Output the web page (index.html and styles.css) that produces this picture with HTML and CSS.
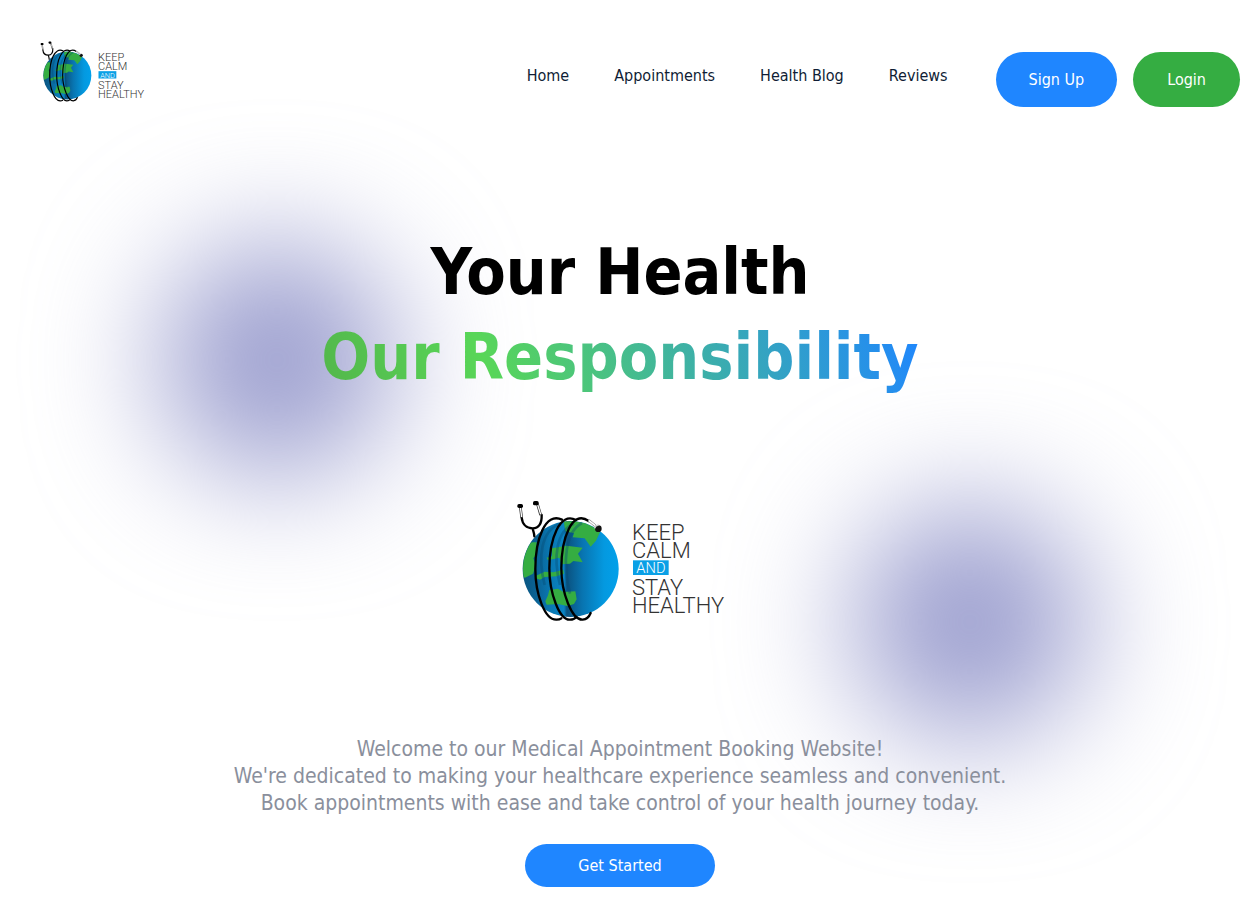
FILE: index.html
```html
<!DOCTYPE html>
<html lang="en">
<head>
<meta charset="utf-8">
<meta name="viewport" content="width=device-width, initial-scale=1">
<title>Keep Calm and Stay Healthy</title>
<link rel="stylesheet" href="styles.css">
</head>
<body>
<div class="page">
  <div class="glow glow-left"></div>
  <div class="glow glow-right"></div>
  <header class="header">
    <a class="brand" href="#home" aria-label="Keep calm and stay healthy">
      <svg class="logo logo-small" viewBox="0 15 720 420">
        <defs>
          <linearGradient id="sea" x1="0" x2="1" y1="0" y2="0">
            <stop offset="0" stop-color="#0a5580"/>
            <stop offset=".15" stop-color="#0a6396"/>
            <stop offset=".3" stop-color="#0979b4"/>
            <stop offset=".43" stop-color="#0a84c4"/>
            <stop offset=".46" stop-color="#0a5280"/>
            <stop offset=".62" stop-color="#0874b0"/>
            <stop offset=".85" stop-color="#0499e0"/>
            <stop offset="1" stop-color="#02a0ea"/>
          </linearGradient>
          <clipPath id="disc"><circle cx="212" cy="252" r="143"/></clipPath>
          <g id="globe">
            <circle cx="212" cy="252" r="144" fill="url(#sea)"/>
            <g clip-path="url(#disc)" fill="#35ad42">
              <path d="M60 180l38-8 12 0-1 38-9 10 8 20-9 26-24 12-20-6zM190 105l50 0 62 32-14 30-16 18-18-25-36-3 4-12-26-6-4-24z"/>
              <path d="M156 190l44-8 48 6-14 18 14 26-28-4-10 8-26 2-6-20-34 8-4-8 16-4zM108 272l26-12 26 2 30-8 2 12-22 8-36 2-14 8-12-4zM148 315l26-4 16 10 36-2 4 24-8 14-20 6-28-6-34 2-4-10 8-18z"/>
            </g>
            <g fill="none" stroke="#064a72" stroke-opacity=".4" stroke-width="8">
              <path d="M180 116c-56 20-68 100-46 184M222 116c-52 20-64 100-42 184M246 114c-50 26-60 120-36 212"/>
            </g>
            <g fill="none" stroke="#000" stroke-width="7" stroke-linecap="round">
              <path d="M186 104c-50-24-80 58-80 148 0 74 28 154 64 152 6 0 10-1 14-4"/>
              <path d="M228 105c-48-26-80 55-80 145 0 74 30 156 62 154 9 0 15-3 19-8"/>
              <path d="M266 108c-50-36-82 52-82 142 0 74 32 156 64 154 12-1 20-10 24-20"/>
              <path d="M65 98c2 20 15 32 33 32s28-14 27-40M98 130c1 8 5 14 5 24"/>
            </g>
            <path d="M61 66l4 32M112 56l10 34" fill="none" stroke="#333" stroke-width="8"/>
            <path d="M61 66l4 30M112 56l10 32" fill="none" stroke="#fff" stroke-width="4"/>
            <g fill="#000"><rect x="52" y="57" width="17" height="12" rx="5"/><rect x="99" y="48" width="17" height="13" rx="5"/></g>
            <path d="M266 106l20 16" stroke="#777" stroke-width="8"/>
            <path d="M266 106l20 16" stroke="#fff" stroke-width="5"/>
            <circle cx="295" cy="131" r="10" fill="#111"/>
            <path d="M284 130q2-9 12-10" fill="none" stroke="#ccc" stroke-width="4"/>
          </g>
        </defs>
        <use href="#globe"/>
        <rect x="399" y="226" width="107" height="44" fill="#0aa0e6"/>
        <g class="logo-text">
          <text x="396" y="166">KEEP</text>
          <text x="396" y="219">CALM</text>
          <text class="logo-and" x="409" y="264">AND</text>
          <text x="396" y="331">STAY</text>
          <text x="396" y="384">HEALTHY</text>
        </g>
      </svg>
    </a>
    <nav class="nav">
      <a href="#home">Home</a>
      <a href="#appointments">Appointments</a>
      <a href="#blog">Health Blog</a>
      <a href="#reviews">Reviews</a>
    </nav>
    <div class="actions">
      <button class="button signup" type="button">Sign Up</button>
      <button class="button login" type="button">Login</button>
    </div>
  </header>
  <main class="hero">
    <h1 class="title">Your Health<br><span class="title-accent">Our Responsibility</span></h1>
    <svg class="logo logo-large" viewBox="0 15 720 420">
      <use href="#globe"/>
      <rect x="399" y="226" width="107" height="44" fill="#0aa0e6"/>
      <g class="logo-text">
        <text x="396" y="166">KEEP</text>
        <text x="396" y="219">CALM</text>
        <text class="logo-and" x="409" y="264">AND</text>
        <text x="396" y="331">STAY</text>
        <text x="396" y="384">HEALTHY</text>
      </g>
    </svg>
    <p class="intro">Welcome to our Medical Appointment Booking Website!<br>We're dedicated to making your healthcare experience seamless and convenient.<br>Book appointments with ease and take control of your health journey today.</p>
    <button class="button start" type="button">Get Started</button>
  </main>
</div>
</body>
</html>
```
FILE: styles.css
```css
* { box-sizing: border-box; }
body {
  margin: 0;
  background: #fff;
  font-family: Tahoma, "DejaVu Sans Condensed", "Noto Sans", sans-serif;
  font-size: 16px;
  color: #0f1d35;
}
.page {
  position: relative;
  min-height: 100vh;
  overflow: hidden;
  isolation: isolate;
}
.glow {
  position: absolute;
  z-index: -1;
  width: 232px;
  height: 232px;
  border-radius: 50%;
  background: #989bcd;
  filter: blur(64px);
}
.glow-left { left: 161px; top: 244px; }
.glow-right { right: 160px; top: 506px; }
.header {
  display: flex;
  align-items: flex-start;
  padding: 36px 6px 0 32px;
}
.brand { margin-right: auto; }
.logo { display: block; }
.logo-small { width: 120px; height: 70px; }
.logo-large { width: 240px; height: 140px; margin-top: 90px; }
.logo-text {
  font-family: Roboto, sans-serif;
  font-size: 66px;
  font-weight: 300;
  fill: #333;
}
.logo-and { font-size: 44px; fill: #fff; }
.nav {
  display: flex;
  gap: 45px;
  padding-top: 30px;
  line-height: 20px;
}
.nav a { color: inherit; text-decoration: none; }
.actions {
  display: flex;
  gap: 16px;
  margin: 16px 0 0 48px;
}
.button {
  border: 0;
  border-radius: 28px;
  background: #1f86ff;
  color: #fff;
  font: inherit;
  line-height: 20px;
  white-space: nowrap;
}
.signup { padding: 18px 33px 17px; }
.login { padding: 18px 34px 17px; background: #35ad42; }
.hero {
  display: flex;
  flex-direction: column;
  align-items: center;
  padding: 123px 6px 34px 0;
}
.title {
  margin: 0;
  font-size: 64px;
  font-weight: 700;
  line-height: 85px;
  text-align: center;
  color: #000;
}
.title-accent {
  background: linear-gradient(70deg, #53b64b 0%, #58d658 28%, #1f86ff 100%);
  -webkit-background-clip: text;
  background-clip: text;
  color: transparent;
}
.intro {
  margin: 106px 0 27px;
  font-size: 21px;
  line-height: 27px;
  text-align: center;
  color: #8a8f9c;
}
.start { padding: 12px 53px 11px; }
```
